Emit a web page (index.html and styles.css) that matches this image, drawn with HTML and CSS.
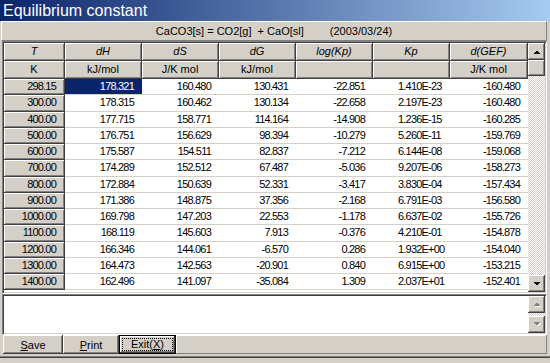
FILE: index.html
```html
<!DOCTYPE html>
<html lang="en">
<head>
  <meta charset="UTF-8">
  <title>Equilibrium constant</title>
  <link rel="stylesheet" href="styles.css">
</head>
<body>
  <div class="window">
    <div class="titlebar">Equilibrium constant</div>

    <!-- reaction + date -->
    <div class="formula"><span>CaCO3[s] = CO2[g]  + CaO[sl]</span><span class="date">(2003/03/24)</span></div>

    <!-- result grid -->
    <div class="grid">
      <div class="sheet">
        <div class="row head">
          <div class="cell fixed ital">T</div>
          <div class="cell fixed ital">dH</div>
          <div class="cell fixed ital">dS</div>
          <div class="cell fixed ital">dG</div>
          <div class="cell fixed ital">log(Kp)</div>
          <div class="cell fixed ital">Kp</div>
          <div class="cell fixed ital">d(GEF)</div>
        </div>
        <div class="row head">
          <div class="cell fixed">K</div>
          <div class="cell fixed">kJ/mol</div>
          <div class="cell fixed">J/K mol</div>
          <div class="cell fixed">kJ/mol</div>
          <div class="cell fixed"></div>
          <div class="cell fixed"></div>
          <div class="cell fixed">J/K mol</div>
        </div>
        <div class="row">
          <div class="cell fixed">298.15</div><div class="cell sel">178.321</div><div class="cell">160.480</div><div class="cell">130.431</div><div class="cell">-22.851</div><div class="cell kp">1.410E-23</div><div class="cell">-160.480</div>
        </div>
        <div class="row">
          <div class="cell fixed">300.00</div><div class="cell">178.315</div><div class="cell">160.462</div><div class="cell">130.134</div><div class="cell">-22.658</div><div class="cell kp">2.197E-23</div><div class="cell">-160.480</div>
        </div>
        <div class="row">
          <div class="cell fixed">400.00</div><div class="cell">177.715</div><div class="cell">158.771</div><div class="cell">114.164</div><div class="cell">-14.908</div><div class="cell kp">1.236E-15</div><div class="cell">-160.285</div>
        </div>
        <div class="row">
          <div class="cell fixed">500.00</div><div class="cell">176.751</div><div class="cell">156.629</div><div class="cell">98.394</div><div class="cell">-10.279</div><div class="cell kp">5.260E-11</div><div class="cell">-159.769</div>
        </div>
        <div class="row">
          <div class="cell fixed">600.00</div><div class="cell">175.587</div><div class="cell">154.511</div><div class="cell">82.837</div><div class="cell">-7.212</div><div class="cell kp">6.144E-08</div><div class="cell">-159.068</div>
        </div>
        <div class="row">
          <div class="cell fixed">700.00</div><div class="cell">174.289</div><div class="cell">152.512</div><div class="cell">67.487</div><div class="cell">-5.036</div><div class="cell kp">9.207E-06</div><div class="cell">-158.273</div>
        </div>
        <div class="row">
          <div class="cell fixed">800.00</div><div class="cell">172.884</div><div class="cell">150.639</div><div class="cell">52.331</div><div class="cell">-3.417</div><div class="cell kp">3.830E-04</div><div class="cell">-157.434</div>
        </div>
        <div class="row">
          <div class="cell fixed">900.00</div><div class="cell">171.386</div><div class="cell">148.875</div><div class="cell">37.356</div><div class="cell">-2.168</div><div class="cell kp">6.791E-03</div><div class="cell">-156.580</div>
        </div>
        <div class="row">
          <div class="cell fixed">1000.00</div><div class="cell">169.798</div><div class="cell">147.203</div><div class="cell">22.553</div><div class="cell">-1.178</div><div class="cell kp">6.637E-02</div><div class="cell">-155.726</div>
        </div>
        <div class="row">
          <div class="cell fixed">1100.00</div><div class="cell">168.119</div><div class="cell">145.603</div><div class="cell">7.913</div><div class="cell">-0.376</div><div class="cell kp">4.210E-01</div><div class="cell">-154.878</div>
        </div>
        <div class="row">
          <div class="cell fixed">1200.00</div><div class="cell">166.346</div><div class="cell">144.061</div><div class="cell">-6.570</div><div class="cell">0.286</div><div class="cell kp">1.932E+00</div><div class="cell">-154.040</div>
        </div>
        <div class="row">
          <div class="cell fixed">1300.00</div><div class="cell">164.473</div><div class="cell">142.563</div><div class="cell">-20.901</div><div class="cell">0.840</div><div class="cell kp">6.915E+00</div><div class="cell">-153.215</div>
        </div>
        <div class="row">
          <div class="cell fixed">1400.00</div><div class="cell">162.496</div><div class="cell">141.097</div><div class="cell">-35.084</div><div class="cell">1.309</div><div class="cell kp">2.037E+01</div><div class="cell">-152.401</div>
        </div>
      </div>
      <div class="vscroll">
        <div class="sbtn"><svg width="7" height="4" viewBox="0 0 7 4"><polygon points="0,4 3.5,0.5 7,4"/></svg></div>
        <div class="thumb"></div>
        <div class="track"></div>
        <div class="sbtn"><svg width="7" height="4" viewBox="0 0 7 4"><polygon points="0,0 7,0 3.5,3.5"/></svg></div>
      </div>
    </div>

    <!-- memo -->
    <div class="memo">
      <div class="memo-text"></div>
      <div class="vscroll">
        <div class="sbtn off"><svg width="8" height="5" viewBox="0 0 8 5"><polygon class="hl" points="1,5 4.5,1.5 8,5"/><polygon points="0,4 3.5,0.5 7,4"/></svg></div>
        <div class="track"></div>
        <div class="sbtn off"><svg width="8" height="5" viewBox="0 0 8 5"><polygon class="hl" points="1,1 8,1 4.5,4.5"/><polygon points="0,0 7,0 3.5,3.5"/></svg></div>
      </div>
    </div>

    <!-- buttons -->
    <div class="toolbar">
      <button class="btn save"><u>S</u>ave</button>
      <button class="btn print"><u>P</u>rint</button>
      <button class="btn exit"><span class="focus">Exit(<u>X</u>)</span></button>
      <div class="toolbar-fill"></div>
    </div>
    <div class="bottom"></div>
  </div>
</body>
</html>
```

FILE: styles.css
```css
body {
  margin: 0;
  background-color: #d4d0c8;
  font-family: "Liberation Sans", Arial, sans-serif;
  font-size: 11px;
  color: #000;
}

.window {
  width: 550px;
  height: 363px;
  overflow: hidden;
}

.titlebar {
  height: 21px;
  line-height: 22px;
  padding-left: 3px;
  color: white;
  font-size: 16px;
  background: linear-gradient(to right, #0a246a, #a6caf0);
}

.formula {
  box-sizing: border-box;
  height: 20px;
  margin: 0 3px 0 1px;
  border: 1px solid;
  border-color: #fff #808080 #808080 #fff;
  display: flex;
  justify-content: center;
  align-items: center;
  white-space: pre;
}

.formula .date {
  margin-left: 26px;
}

.grid,
.memo {
  box-sizing: border-box;
  margin: 0 3px 0 2px;
  border: 1px solid;
  border-color: #808080 #fff #fff #808080;
  padding: 1px;
  box-shadow: inset 1px 1px 0 #404040, inset -1px -1px 0 #d4d0c8;
  background-color: white;
  display: flex;
}

.grid {
  height: 253px;
}

.sheet {
  flex: 1;
  overflow: hidden;
  background-color: white;
}

.row {
  display: grid;
  grid-template-columns: 61px repeat(5, 77px) 78px;
  height: 16.25px;
}

.row.head {
  height: 18px;
}

.cell {
  box-sizing: border-box;
  border-bottom: 1px solid #d4d0c8;
  padding-right: 8px;
  text-align: right;
  line-height: 15px;
  letter-spacing: -0.8px;
  white-space: nowrap;
  overflow: hidden;
}

.cell.fixed {
  background-color: #d4d0c8;
  border-right: 1px solid #404040;
  border-bottom: 1px solid #404040;
  box-shadow: inset 1px 1px 0 #fff, inset -1px -1px 0 #808080;
}

.head .cell {
  text-align: center;
  padding: 0;
  line-height: 17px;
  letter-spacing: 0;
}

.head .ital {
  font-style: italic;
}

.cell.sel {
  background-color: #0a246a;
  color: white;
}

.cell.kp {
  text-align: left;
  padding: 0 0 0 25px;
}

.vscroll {
  width: 17px;
  display: flex;
  flex-direction: column;
  background: repeating-conic-gradient(#fff 0 25%, #d4d0c8 0 50%) 0 0 / 2px 2px;
}

.sbtn,
.thumb {
  height: 17px;
  flex: none;
  background-color: #d4d0c8;
  box-shadow: inset -1px -1px 0 #404040, inset 1px 1px 0 #fff, inset -2px -2px 0 #808080;
  display: flex;
  align-items: center;
  justify-content: center;
}

.thumb {
  height: 16px;
}

.track {
  flex: 1;
}

.sbtn svg {
  shape-rendering: crispEdges;
}

.sbtn.off polygon {
  fill: #808080;
}

.sbtn.off polygon.hl {
  fill: #fff;
}

.memo {
  height: 41px;
}

.memo-text {
  flex: 1;
}

.toolbar {
  display: flex;
  height: 19px;
  margin: 0 3px;
}

.btn {
  box-sizing: border-box;
  height: 19px;
  padding: 0;
  border: none;
  background-color: #d4d0c8;
  font-family: "Liberation Sans", Arial, sans-serif;
  font-size: 11px;
  color: #000;
  box-shadow: inset -1px -1px 0 #404040, inset 1px 1px 0 #fff, inset -2px -2px 0 #808080;
}

.btn.save {
  width: 60px;
}

.btn.print {
  width: 56px;
}

.btn.exit {
  width: 57px;
  border: 1px solid #000;
  display: flex;
  align-items: stretch;
  padding: 2px;
}

.btn.exit .focus {
  flex: 1;
  border: 1px dotted #000;
  line-height: 11px;
}

.toolbar-fill {
  flex: 1;
  box-shadow: inset -1px -1px 0 #808080, inset 1px 1px 0 #fff;
}

.bottom {
  margin-top: 2px;
  height: 8px;
  border-top: 1px solid #808080;
  box-shadow: inset 0 1px 0 #404040;
}
```
